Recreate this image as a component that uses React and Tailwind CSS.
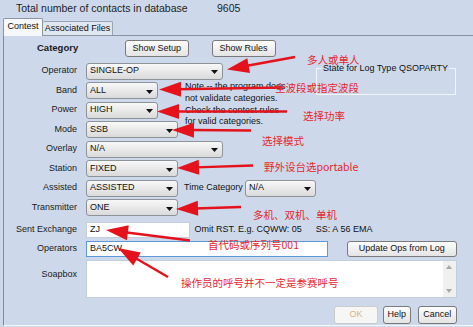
import React from 'react';

const RED = '#e5121c';

// annotation arrows: tail x, tail y, tip x, tip y
const arrows = [
  [295, 57, 227, 69.5],
  [282, 87.5, 159, 89.5],
  [287, 111.5, 157, 111.5],
  [251, 130.5, 172, 130],
  [253, 165.5, 177, 168],
  [241, 207, 176, 209],
  [190, 240.5, 106, 230],
  [168, 277, 118, 248],
];

const notes = [
  { text: '多人或单人', x: 307, y: 54 },
  { text: '全波段或指定波段', x: 275, y: 81.5 },
  { text: '选择功率', x: 303, y: 110 },
  { text: '选择模式', x: 262, y: 134.5 },
  { text: '野外设台选portable', x: 264, y: 160.5 },
  { text: '多机、双机、单机', x: 253, y: 209 },
  { text: '首代码或序列号001', x: 208, y: 239 },
  { text: '操作员的呼号并不一定是参赛呼号', x: 181, y: 277 },
];

const Arrow = ({ a }) => {
  const [x1, y1, x2, y2] = a;
  const len = Math.hypot(x2 - x1, y2 - y1);
  const ux = (x2 - x1) / len;
  const uy = (y2 - y1) / len;
  const hl = 22;
  const hw = 7.5;
  const bx = x2 - ux * hl;
  const by = y2 - uy * hl;
  const pts = `${x2},${y2} ${bx - uy * hw},${by + ux * hw} ${bx + uy * hw},${by - ux * hw}`;
  return (
    <g>
      <line x1={x1} y1={y1} x2={bx + ux * 3} y2={by + uy * 3} stroke={RED} strokeWidth="2.5" />
      <polygon points={pts} fill={RED} />
    </g>
  );
};

const Caret = () => (
  <svg width="7" height="4" viewBox="0 0 7 4" className="mt-[2px] shrink-0">
    <path d="M0 0H7L3.5 4Z" fill="#111" />
  </svg>
);

const Select = ({ value, className }) => (
  <div
    className={`flex h-[17px] items-center justify-between rounded-[3px] border border-[#8e9398] bg-linear-to-b from-[#f8f8f8] to-[#dadada] pl-[3px] pr-[4px] text-[9px] text-[#111] ${className}`}
  >
    <span>{value}</span>
    <Caret />
  </div>
);

const Label = ({ children }) => (
  <div className="col-start-1 flex items-center justify-end pr-[9px] text-[9px] text-[#1a1a1a]">{children}</div>
);

const Btn = ({ children, className }) => (
  <div
    className={`flex items-center justify-center rounded-[3px] border border-[#7a7a7a] bg-linear-to-b from-[#fdfdfd] to-[#e4e4e4] text-[9px] text-[#111] ${className}`}
  >
    {children}
  </div>
);

export default function App() {
  return (
    <div className="relative h-[327px] w-[473px] overflow-hidden bg-[#cdd9ea] font-['Liberation_Sans',Arial,sans-serif]">
      {/* header */}
      <div className="flex h-[18px] items-center text-[10.5px] text-[#1e1e1e]">
        <span className="w-[217px] pl-[16px]">Total number of contacts in database</span>
        <span>9605</span>
      </div>

      {/* tabs */}
      <div className="flex h-[17px] items-end pl-[3px] text-[9px] text-[#111]">
        <div className="relative z-[1] -mb-px flex h-[18px] w-[40px] items-center justify-center rounded-t-[2px] border border-b-0 border-[#8c96a3] bg-[#f5f7fa] pb-[1px]">
          Contest
        </div>
        <div className="flex h-[14px] w-[70px] items-center justify-center rounded-t-[2px] border border-b-0 border-l-0 border-[#9aa4b1] bg-[#dfe6ef]">
          Associated Files
        </div>
      </div>

      {/* panel */}
      <div className="ml-[3px] w-[480px] border-b border-l border-t border-b-[#f4f7fb] border-l-[#7f8994] border-t-[#8c96a3] pb-[1.5px]">
        <div className="mt-[3.5px] flex h-[17.5px] items-center">
          <span className="w-[121px] pl-[33px] text-[9.5px] font-bold text-[#1a1a1a]">Category</span>
          <Btn className="h-full w-[63.5px]">Show Setup</Btn>
          <Btn className="ml-[23px] h-full w-[64px]">Show Rules</Btn>
        </div>

        <div className="mt-[4.25px] grid auto-rows-[19.5px] grid-cols-[82px_100px_130px_140px]">
          <Label>Operator</Label>
          <div className="col-span-2 flex items-center">
            <Select value="SINGLE-OP" className="w-[137px]" />
          </div>
          <div className="row-span-2 pb-[5.25px] pt-[6.75px]">
            <div className="relative h-full border border-[#f1f5fa]">
              <span className="absolute left-[5px] top-[-6.5px] bg-[#cdd9ea] px-[1px] text-[9px] leading-[11px] text-[#111]">
                State for Log Type QSOPARTY
              </span>
            </div>
          </div>

          <Label>Band</Label>
          <div className="flex items-center">
            <Select value="ALL" className="w-[72px]" />
          </div>
          <div className="row-span-3 -ml-px pt-[0.5px] text-[9px] leading-[11.7px] text-[#111]">
            <div>Note -- the program does</div>
            <div>not validate categories.</div>
            <div>Check the contest rules</div>
            <div>for valid categories.</div>
          </div>

          <Label>Power</Label>
          <div className="flex items-center">
            <Select value="HIGH" className="w-[72px]" />
          </div>

          <Label>Mode</Label>
          <div className="flex items-center">
            <Select value="SSB" className="w-[92px]" />
          </div>

          <Label>Overlay</Label>
          <div className="col-span-2 flex items-center">
            <Select value="N/A" className="w-[137px]" />
          </div>

          <Label>Station</Label>
          <div className="flex items-center">
            <Select value="FIXED" className="w-[92px]" />
          </div>

          <Label>Assisted</Label>
          <div className="col-span-3 flex items-center">
            <Select value="ASSISTED" className="w-[92px]" />
            <span className="ml-[6px] w-[61px] text-[9px] text-[#111]">Time Category</span>
            <Select value="N/A" className="w-[71px]" />
          </div>

          <Label>Transmitter</Label>
          <div className="flex items-center">
            <Select value="ONE" className="w-[92px]" />
          </div>
        </div>

        {/* sent exchange */}
        <div className="mt-[4.25px] flex h-[16.5px] items-center text-[9px] text-[#111]">
          <div className="w-[82px] pr-[9px] text-right text-[#1a1a1a]">Sent Exchange</div>
          <div className="flex h-full w-[103.5px] items-center border border-[#c3cedb] bg-white pl-[3px]">ZJ</div>
          <span className="ml-[5px]">Omit RST. E.g. CQWW: 05</span>
          <span className="ml-[14px]">SS: A 56 EMA</span>
        </div>

        {/* operators */}
        <div className="mt-[3px] flex h-[16px] items-center text-[9px] text-[#111]">
          <div className="w-[82px] pr-[9px] text-right text-[#1a1a1a]">Operators</div>
          <div className="flex h-full w-[242px] items-center border border-[#5a9ad8] bg-white pl-[3px]">BA5CW</div>
          <Btn className="ml-[19px] h-[16.5px] w-[109.5px]">Update Ops from Log</Btn>
        </div>

        {/* soapbox */}
        <div className="mt-[2.5px] flex h-[38px] text-[9px]">
          <div className="w-[82px] pr-[9px] pt-[8.5px] text-right text-[#1a1a1a]">Soapbox</div>
          <div className="flex h-full w-[370.5px] justify-end border border-[#c3cedb] bg-white">
            <div className="flex w-[13px] flex-col items-center justify-between bg-[#f0f0f0] py-[4px]">
              <svg width="6" height="4" viewBox="0 0 6 4">
                <path d="M0 4H6L3 0Z" fill="#a8a8a8" />
              </svg>
              <svg width="6" height="4" viewBox="0 0 6 4">
                <path d="M0 0H6L3 4Z" fill="#a8a8a8" />
              </svg>
            </div>
          </div>
        </div>

        {/* bottom buttons */}
        <div className="mt-[8px] flex h-[18px] pl-[330px]">
          <div className="flex w-[44px] items-center justify-center rounded-[3px] border border-[#cbcbcb] bg-[#f6f6f4] text-[9px] text-[#d6b47c]">
            OK
          </div>
          <Btn className="ml-[4.5px] w-[28.5px]">Help</Btn>
          <Btn className="ml-[6.5px] w-[39.5px]">Cancel</Btn>
        </div>
      </div>

      {/* red annotations over the dialog */}
      <svg className="pointer-events-none absolute left-0 top-0 z-10" width="473" height="327">
        {arrows.map((a, i) => (
          <Arrow key={i} a={a} />
        ))}
      </svg>
      {notes.map((n) => (
        <span
          key={n.text}
          className="pointer-events-none absolute z-20 whitespace-nowrap font-['Noto_Sans_CJK_SC',sans-serif] text-[10.5px] leading-[12px] text-[#e8262d]"
          style={{ left: n.x, top: n.y }}
        >
          {n.text}
        </span>
      ))}
    </div>
  );
}
